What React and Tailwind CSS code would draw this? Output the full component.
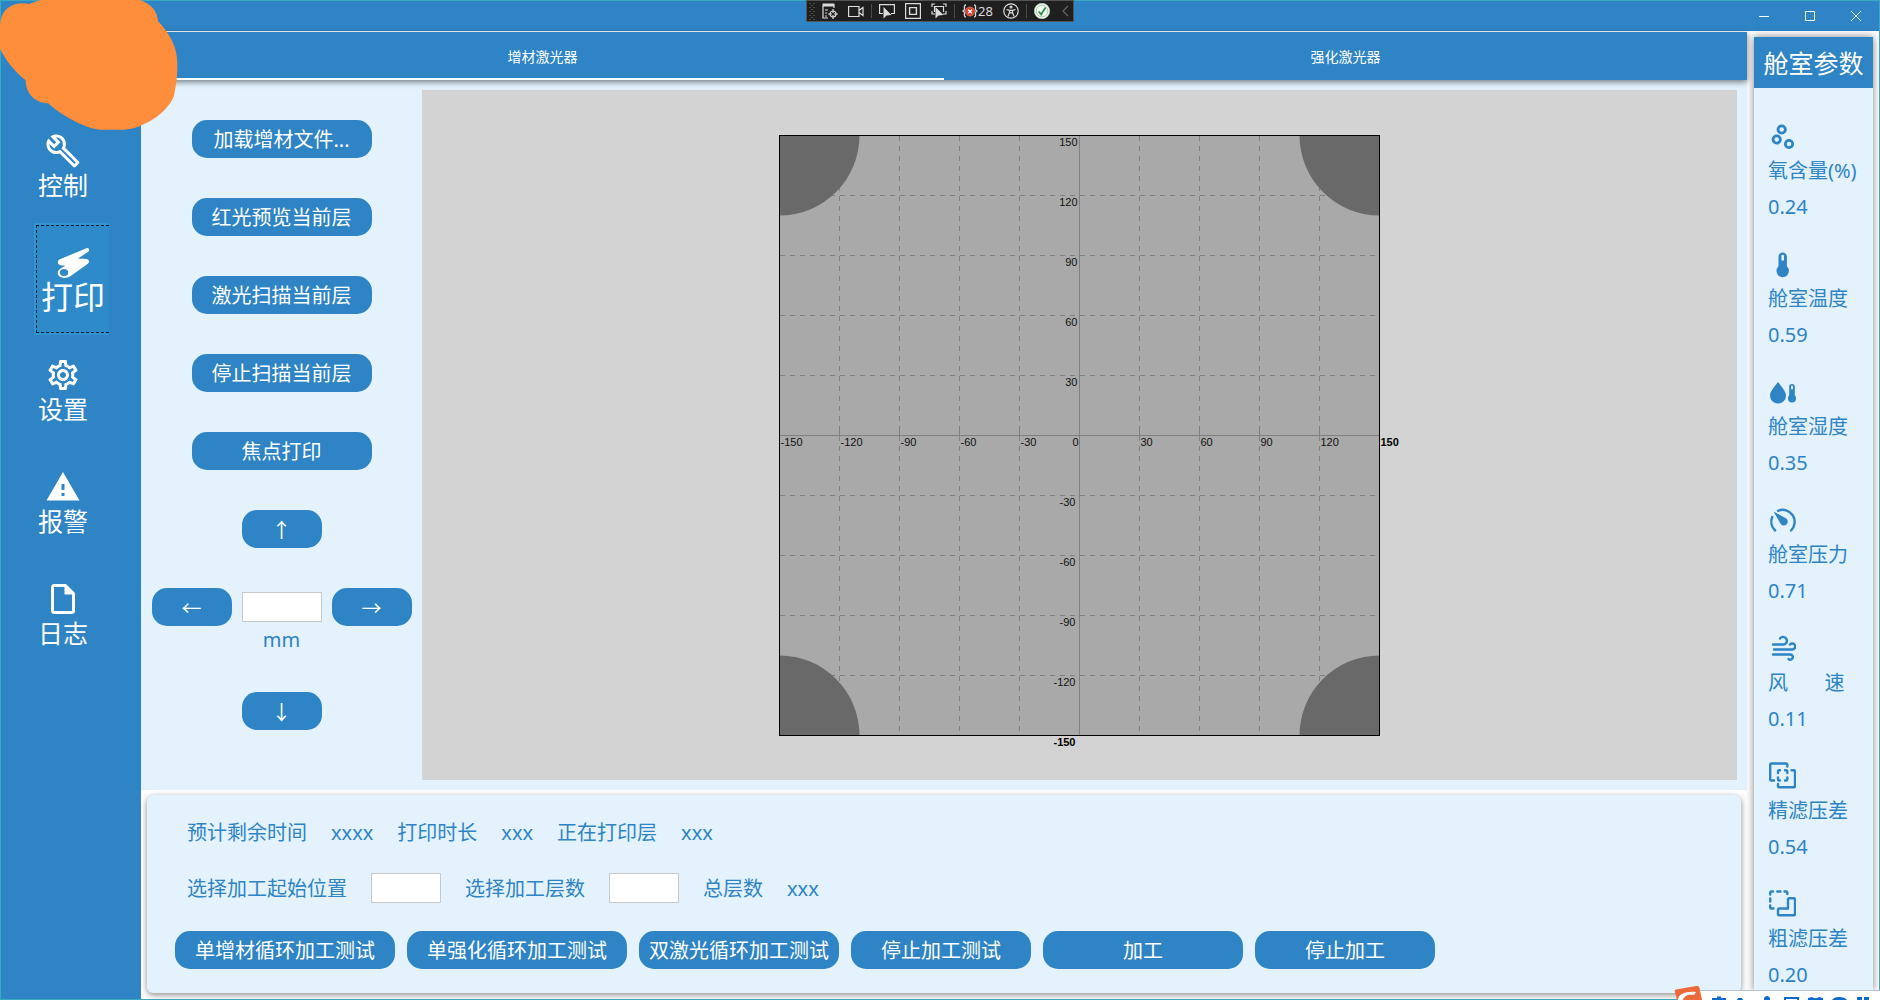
import React, { useState } from 'react';
import { MdOutlineBuild, MdOutlineSettings, MdWarning, MdOutlineInsertDriveFile } from 'react-icons/md';

const PrintIcon = () => (
    <svg viewBox="0 0 36 36" className="w-9 h-9" aria-hidden="true">
        <path
            d="M31.500 3.200 C33.500 2.500 35 4.800 33.500 6.600 L23 13.500 L31.500 14 C34.500 14.500 34.800 17.500 32.500 19 L15 31.500 C10.500 34.200 3 33 2.800 28 C2.800 25 6 23 10.500 20.800 L5.500 20.300 C2 19.500 2 15 5.500 14 Z"
            fill="currentColor"
        />
        <ellipse cx="9" cy="27.500" rx="4.200" ry="3.600" fill="#2e8ac8" />
    </svg>
);

const navItems = [
    { name: '控制', icon: <MdOutlineBuild className="w-9 h-9" /> },
    { name: '打印', icon: <PrintIcon /> },
    { name: '设置', icon: <MdOutlineSettings className="w-9 h-9" /> },
    { name: '报警', icon: <MdWarning className="w-9 h-9" /> },
    { name: '日志', icon: <MdOutlineInsertDriveFile className="w-9 h-9" /> },
];

const Line = ({ children, width = 2.4 }) => (
    <g fill="none" stroke="currentColor" strokeWidth={width} strokeLinecap="round" strokeLinejoin="round">
        {children}
    </g>
);

const params = [
    {
        name: '氧含量(%)',
        value: '0.24',
        icon: (
            <Line width={2.8}>
                <circle cx="13.700" cy="8.500" r="3.700" />
                <circle cx="8.700" cy="18.500" r="3.700" />
                <circle cx="21" cy="23" r="3.700" />
            </Line>
        ),
    },
    {
        name: '舱室温度',
        value: '0.59',
        icon: (
            <>
                <rect x="10.500" y="3.500" width="8.400" height="18" rx="4.200" fill="currentColor" />
                <circle cx="14.700" cy="22" r="6.200" fill="currentColor" />
                <rect x="13.400" y="5.800" width="2.600" height="6" rx="1.300" fill="#e3f2fd" />
            </>
        ),
    },
    {
        name: '舱室湿度',
        value: '0.35',
        icon: (
            <>
                <path d="M10 5 C13.500 9.500 18 14.500 18 18.500 A8 8 0 0 1 2 18.500 C2 14.500 6.500 9.500 10 5 Z" fill="currentColor" />
                <rect x="21.200" y="7" width="5.600" height="15" rx="2.800" fill="currentColor" />
                <circle cx="24" cy="21.500" r="4" fill="currentColor" />
                <rect x="23" y="8.500" width="2" height="4" rx="1" fill="#e3f2fd" />
            </>
        ),
    },
    {
        name: '舱室压力',
        value: '0.71',
        icon: (
            <>
                <Line>
                    <path d="M7.200 25.500 A12 12 0 0 1 4.200 12" />
                    <path d="M10 5.800 A12 12 0 0 1 23 25.500" />
                </Line>
                <path d="M5.500 6.500 L18.300 13.600 A3.900 3.900 0 1 1 12.600 18.800 Z" fill="currentColor" />
            </>
        ),
    },
    {
        name: '风       速',
        value: '0.11',
        icon: (
            <Line>
                <path d="M5 11.500 H15.500 A3.800 3.800 0 1 0 12 5.500" />
                <path d="M6 16.500 H24 A3 3 0 1 0 22 11.500" />
                <path d="M5 21.500 H22 A2.600 2.600 0 1 1 20.500 26" />
            </Line>
        ),
    },
    {
        name: '精滤压差',
        value: '0.54',
        icon: (
            <Line>
                <path d="M6 19.500 H3.500 A1.300 1.300 0 0 1 2.200 18.200 V3.800 A1.300 1.300 0 0 1 3.500 2.500 H18 A1.300 1.300 0 0 1 19.300 3.800 V5.500" />
                <path d="M10 23 V25 A1.300 1.300 0 0 0 11.300 26.300 H25.700 A1.300 1.300 0 0 0 27 25 V10.500 A1.300 1.300 0 0 0 25.700 9.200 H23.500" />
                <path d="M10 12 V10.500 A1.300 1.300 0 0 1 11.300 9.200 H12 M17 9.200 H18 A1.300 1.300 0 0 1 19.300 10.500 V12 M19.300 16.500 V18.200 A1.300 1.300 0 0 1 18 19.500 H17 M12 19.500 H11.300 A1.300 1.300 0 0 1 10 18.200 V16.500" />
            </Line>
        ),
    },
    {
        name: '粗滤压差',
        value: '0.20',
        icon: (
            <Line>
                <path d="M2.200 5.500 V3.800 A1.300 1.300 0 0 1 3.500 2.500 H5 M9.300 2.500 H12.500 M16.500 2.500 H18 A1.300 1.300 0 0 1 19.300 3.800 V5 M2.200 9.500 V12.500 M2.200 16.500 V18.200 A1.300 1.300 0 0 0 3.500 19.500 H5.500" />
                <path d="M20 10.500 A1.300 1.300 0 0 1 21.300 9.200 H25.700 A1.300 1.300 0 0 1 27 10.500 V25 A1.300 1.300 0 0 1 25.700 26.300 H11.300 A1.300 1.300 0 0 1 10 25 V20.800 A1.300 1.300 0 0 1 11.300 19.500 H20 Z" />
            </Line>
        ),
    },
];

const fileActions = ['加载增材文件...', '红光预览当前层', '激光扫描当前层', '停止扫描当前层', '焦点打印'];

const runActions = [
    { name: '单增材循环加工测试', width: 'w-[220px]' },
    { name: '单强化循环加工测试', width: 'w-[220px]' },
    { name: '双激光循环加工测试', width: 'w-[200px]' },
    { name: '停止加工测试', width: 'w-[180px]' },
    { name: '加工', width: 'w-[200px]' },
    { name: '停止加工', width: 'w-[180px]' },
];

const PillButton = ({ className, children, ...props }) => (
    <button
        type="button"
        className={`h-[38px] pt-0.5 rounded-[15px] bg-[#2e84c5] text-white text-xl leading-7 whitespace-nowrap hover:bg-[#3a93d6] ${className}`}
        {...props}
    >
        {children}
    </button>
);

const ArrowButton = ({ label, children }) => (
    <PillButton className="w-20 font-['Noto_Sans_CJK_SC',sans-serif]" aria-label={label}>
        {children}
    </PillButton>
);

// Build plate, 2px per mm, origin in the middle
const BuildPlate = () => {
    const steps = [-120, -90, -60, -30, 30, 60, 90, 120];
    const pos = (mm) => 300 + mm * 2;
    return (
        <svg width="601" height="600" className="overflow-visible shrink-0" role="img" aria-label="加工区域">
            <g transform="translate(0.5 0.5)">
                <rect width="600" height="600" fill="#a9a9a9" />
                <g stroke="#808080" shapeRendering="crispEdges">
                    {steps.map((mm) => (
                        <g key={mm}>
                            <path d={`M${pos(mm)} 0V600`} strokeDasharray="5 5" />
                            <path d={`M0 ${pos(mm)}H600`} strokeDasharray="5 5" />
                            <path d={`M${pos(mm)} 290V303`} />
                        </g>
                    ))}
                    <path d="M300 0V600M0 300H600" />
                </g>
                <g fill="#696969">
                    <path d="M0 0H80A80 80 0 0 1 0 80Z" />
                    <path d="M600 0H520A80 80 0 0 0 600 80Z" />
                    <path d="M0 600H80A80 80 0 0 0 0 520Z" />
                    <path d="M600 600H520A80 80 0 0 1 600 520Z" />
                </g>
                <rect width="600" height="600" fill="none" stroke="#000" shapeRendering="crispEdges" />
                <g className="text-[11px] font-['Liberation_Sans',sans-serif]" fill="#111">
                    {[-150, ...steps].map((mm) => (
                        <text key={mm} x={pos(mm) + 1} y="310">{mm}</text>
                    ))}
                    <text x="299" y="310" textAnchor="end">0</text>
                    <text x="601" y="310" className="font-bold" fill="#000">150</text>
                    {[...steps, 150].map((mm) => (
                        <text key={mm} x={mm < 0 ? 296 : 298} y={pos(-mm) + 10} textAnchor="end">{mm}</text>
                    ))}
                    <text x="296" y="610" textAnchor="end" className="font-bold" fill="#000">-150</text>
                </g>
            </g>
        </svg>
    );
};

const DebugIcon = ({ label, children }) => (
    <button type="button" aria-label={label} className="w-4 h-4 shrink-0">
        <svg viewBox="0 0 16 16" className="w-4 h-4" fill="none" stroke="#dcdcdc" strokeWidth="1.200">
            {children}
        </svg>
    </button>
);

const cursor = 'M4.500 4 V15.500 L7.500 12.500 L12.500 12 Z';

const DebugToolbar = () => (
    <div className="absolute top-0 inset-x-0 mx-auto w-[268px] h-[22px] flex items-center gap-[7px] pl-[2px] bg-[#1f1f1f] border border-[#555] text-[#dcdcdc]">
        <svg viewBox="0 0 6 18" className="w-1.5 h-[18px] shrink-0" aria-hidden="true">
            <path d="M1 1V18M5 1V18" stroke="#777" strokeDasharray="1 3" />
            <path d="M3 3V18" stroke="#777" strokeDasharray="1 3" />
        </svg>
        <div className="flex gap-2.5 shrink-0">
            <DebugIcon label="实时可视化树">
                <path d="M1 3V15H6M12 5V1" />
                <path d="M.5 2H12" strokeWidth="3" />
                <path d="M3 7H6M3 10H5M3 13H5" />
                <circle cx="11" cy="11" r="3" />
                <path d="M11 6V10M11 12V16M6 11H10M12 11H16" />
            </DebugIcon>
            <DebugIcon label="录制">
                <path d="M.6 3.500H11V13.500H.6ZM11 7.500L15 4.500V12.500L11 9.500" />
            </DebugIcon>
        </div>
        <div className="w-px h-3.5 shrink-0 bg-[#4a4a4a]"></div>
        <div className="flex gap-2.5 shrink-0">
            <DebugIcon label="选择元素">
                <path d="M4 10.500H.6V1.600H15.400V10.500H12" />
                <path d={cursor} fill="#dcdcdc" stroke="none" />
            </DebugIcon>
            <DebugIcon label="显示布局装饰器">
                <path d="M.6.6H15.400V15.400H.6Z" />
                <path d="M4.600 4.600H11.400V11.400H4.600Z" strokeWidth="1.400" />
            </DebugIcon>
            <DebugIcon label="跟踪焦点元素">
                <path d="M4 1H1V4M12 1H15V4M1 8V11H4M15 8V11H12M3.500 9V3.500H12.500V9" />
                <path d={cursor} fill="#dcdcdc" stroke="none" />
            </DebugIcon>
        </div>
        <div className="w-px h-3.5 shrink-0 bg-[#4a4a4a]"></div>
        <div className="flex items-center gap-2.5 shrink-0">
            <button type="button" className="flex items-center text-[13px] leading-4" aria-label="绑定失败 28">
                <svg viewBox="0 0 16 16" className="w-4 h-4" fill="none" stroke="#dcdcdc" strokeWidth="1.300" aria-hidden="true">
                    <path d="M4 2C2 2 2.500 4 2.500 6C2.500 7.500 1 8 1 8C1 8 2.500 8.500 2.500 10C2.500 12 2 14 4 14M12 2C14 2 13.500 4 13.500 6C13.500 7.500 15 8 15 8C15 8 13.500 8.500 13.500 10C13.500 12 14 14 12 14" />
                    <circle cx="8" cy="8.500" r="4.500" fill="#e03a2a" stroke="#f0a090" strokeWidth=".6" />
                    <path d="M6.200 6.700L9.800 10.300M9.800 6.700L6.200 10.300" stroke="#fff" />
                </svg>
                28
            </button>
            <DebugIcon label="辅助功能">
                <circle cx="8" cy="8" r="7.200" />
                <circle cx="8" cy="4" r="1" />
                <path d="M3.500 6.500L6.500 7.300V9.500L5 13.500M12.500 6.500L9.500 7.300V9.500L11 13.500M6.500 7.300H9.500M6.800 9.800H9.200" />
            </DebugIcon>
        </div>
        <div className="w-px h-3.5 shrink-0 bg-[#4a4a4a]"></div>
        <div className="flex gap-2.5 shrink-0">
            <DebugIcon label="热重载">
                <circle cx="8" cy="8" r="7.700" fill="#f2f7f2" stroke="#bcd9bc" strokeWidth=".6" />
                <circle cx="8" cy="8" r="5.800" stroke="#8fc49a" strokeWidth=".8" />
                <path d="M4.800 8.500L7.200 11.500L11.500 4.500" stroke="#2f8f46" strokeWidth="1.800" />
            </DebugIcon>
            <DebugIcon label="折叠">
                <path d="M8 3L3 8L8 13" stroke="#666" />
            </DebugIcon>
        </div>
    </div>
);

const windowButtons = [
    { label: '最小化', d: 'M0 5.5H10' },
    { label: '最大化', d: 'M.5.5H9.5V9.5H.5Z' },
    { label: '关闭', d: 'M0 0L10 10M10 0L0 10' },
];

const TitleBar = () => (
    <header className="flex justify-end shrink-0 h-[30px] bg-[#2e84c5]">
        {windowButtons.map(({ label, d }) => (
            <button key={label} type="button" aria-label={label} className="w-[46px] flex items-center justify-center hover:bg-white/20">
                <svg viewBox="0 0 10 10" className="w-2.5 h-2.5" fill="none" stroke="#fff">
                    <path d={d} />
                </svg>
            </button>
        ))}
    </header>
);

const ImeBar = () => (
    <svg width="206" height="14" className="absolute right-0 bottom-0" aria-hidden="true">
        <path d="M16 4H206V14H16Z" fill="#fff" />
        <path d="M24 4.500H206" stroke="#b4c3d6" />
        <path d="M3 14L1 6Q0 4 2 3.500L22 0Q25 -.5 25.500 2L28 14Z" fill="#ec6a3a" />
        <path d="M4 14C4 8 12 5 22 6L20 9C14 8 10 10 9 14Z" fill="#fff" />
        <g fill="#0b6bcb">
            <path d="M38 12H43V10.500H47V12H52V14H38Z" />
            <path d="M64 12H68L69 14H63Z" />
            <path d="M90 14V12Q93 8 96 12V14Z" />
            <path d="M110 11H125V14H123V13H112V14H110Z" />
            <path d="M134 14V12L138 11Q142 13.500 145 11L149 12V14Z" />
            <path d="M158 14Q160 11 165 11Q171 11 173 14Z" />
            <path d="M183 11H188V14H183ZM190 11H195V14H190Z" />
        </g>
    </svg>
);

const App = () => {
    const [page, setPage] = useState('打印');
    const [tab, setTab] = useState('增材激光器');
    return (
        <div className="relative h-screen overflow-hidden text-[#2e84c5] text-xl leading-7 font-['Noto_Sans','Noto_Sans_CJK_SC',sans-serif]">
            <div className="h-full overflow-hidden flex flex-col border border-[#38aabf] bg-white">
                <TitleBar />
                <div className="flex flex-1 min-h-0">
                    <nav className="w-[140px] shrink-0 bg-[#2e84c5] pt-20 pl-[33px] flex flex-col items-start text-white">
                        {navItems.map(({ name, icon }) => (
                            <button
                                key={name}
                                type="button"
                                onClick={() => setPage(name)}
                                aria-current={page === name ? 'page' : undefined}
                                className={
                                    page === name
                                        ? 'h-28 w-[75px] shrink-0 border-2 border-r-0 border-[#3392d2] bg-[#2e8ac8] text-[32px] leading-8'
                                        : 'h-28 w-[58px] shrink-0 text-[25px] leading-8'
                                }
                            >
                                <span
                                    className={`h-full flex flex-col items-center justify-center whitespace-nowrap ${
                                        page === name ? 'border border-r-0 border-dashed border-[#123]' : ''
                                    }`}
                                >
                                    {icon}
                                    <span className="block h-8">{name}</span>
                                </span>
                            </button>
                        ))}
                    </nav>
                    <main className="flex-1 min-w-0 flex flex-col pt-px">
                        <div role="tablist" className="relative h-12 shrink-0 flex bg-[#2e84c5] text-white text-sm shadow-[0_2px_6px_rgba(0,0,0,0.5)]">
                            {['增材激光器', '强化激光器'].map((name) => (
                                <button
                                    key={name}
                                    type="button"
                                    role="tab"
                                    aria-selected={tab === name}
                                    onClick={() => setTab(name)}
                                    className={`flex-1 border-b-2 pt-1 ${tab === name ? 'border-white' : 'border-transparent'}`}
                                >
                                    {name}
                                </button>
                            ))}
                        </div>
                        <div className="flex-1 min-h-0 flex bg-[#e3f2fd]">
                            <div className="w-[281px] shrink-0 flex flex-col items-center pt-10 gap-10">
                                {fileActions.map((name) => (
                                    <PillButton key={name} className="w-[180px]">{name}</PillButton>
                                ))}
                                <ArrowButton label="向上">↑</ArrowButton>
                                <div className="flex flex-col items-center">
                                    <div className="flex items-center gap-2.5">
                                        <ArrowButton label="向左">←</ArrowButton>
                                        <input id="step" type="text" className="w-20 h-[30px] px-1 bg-white border border-[#c8c8c8] outline-none" />
                                        <ArrowButton label="向右">→</ArrowButton>
                                    </div>
                                    <label htmlFor="step" className="h-[26px]">mm</label>
                                </div>
                                <ArrowButton label="向下">↓</ArrowButton>
                            </div>
                            <div className="flex-1 min-w-0 my-2.5 mr-2.5 flex items-center justify-center bg-[#d3d3d3]">
                                <BuildPlate />
                            </div>
                        </div>
                        <section className="shrink-0 px-1.5 pt-[5px] pb-1.5">
                            <div className="flex flex-col gap-7 px-7 py-6 rounded-md bg-[#e3f2fd] shadow-[0_2px_6px_rgba(0,0,0,0.45)]">
                                <div className="flex gap-6 pl-3 h-[26px]">
                                    <span>预计剩余时间</span>
                                    <span>xxxx</span>
                                    <span>打印时长</span>
                                    <span>xxx</span>
                                    <span>正在打印层</span>
                                    <span>xxx</span>
                                </div>
                                <div className="flex items-end gap-6 pl-3 h-[30px]">
                                    <label htmlFor="start">选择加工起始位置</label>
                                    <input id="start" type="text" className="w-[70px] h-[30px] px-1 bg-white border border-[#c8c8c8] outline-none" />
                                    <label htmlFor="layers">选择加工层数</label>
                                    <input id="layers" type="text" className="w-[70px] h-[30px] px-1 bg-white border border-[#c8c8c8] outline-none" />
                                    <span>总层数</span>
                                    <span>xxx</span>
                                </div>
                                <div className="flex gap-3">
                                    {runActions.map(({ name, width }) => (
                                        <PillButton key={name} className={width}>{name}</PillButton>
                                    ))}
                                </div>
                            </div>
                        </section>
                    </main>
                    <aside className="w-[132px] shrink-0 pl-[7px] pr-1.5 pt-1.5 pb-2 flex">
                        <div className="flex-1 flex flex-col bg-[#e3f2fd] shadow-[0_0_8px_rgba(0,0,0,0.5)]">
                            <h2 className="h-[51px] shrink-0 flex items-center justify-center bg-[#2e84c5] text-white text-[25px] whitespace-nowrap">
                                舱室参数
                            </h2>
                            <dl className="flex flex-col gap-7 pt-[33px] pl-3.5">
                                {params.map(({ name, value, icon }) => (
                                    <div key={name}>
                                        <svg viewBox="0 0 28 32" className="w-7 h-8 mb-1" aria-hidden="true">{icon}</svg>
                                        <dt className="whitespace-pre mb-2">{name}</dt>
                                        <dd>{value}</dd>
                                    </div>
                                ))}
                            </dl>
                        </div>
                    </aside>
                </div>
            </div>
            <svg viewBox="0 0 540 390" className="absolute top-0 left-0 w-[180px] h-[130px]" aria-hidden="true">
                <path
                    d="M88 12C55 5 18 15 5 50C0 65 0 75 0 90L0 145C12 175 45 217 77 241C77 285 110 310 145 310C175 340 250 384 298 389L372 389C430 385 500 340 521 290C530 250 537 200 528 155C520 120 495 85 474 64C473 35 455 12 420 0L125 0C110 3 100 7 88 12Z"
                    fill="#ff8e3c"
                />
            </svg>
            <DebugToolbar />
            <ImeBar />
        </div>
    );
};

export default App;
